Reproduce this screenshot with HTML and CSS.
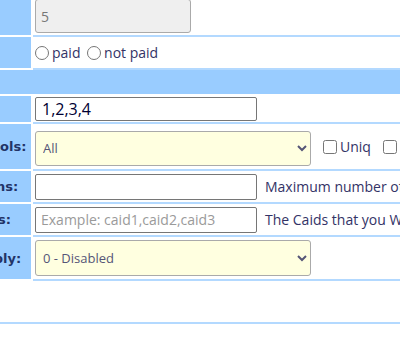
FILE: index.html
```html
<!DOCTYPE html>
<html lang="en">
<head>
  <meta charset="UTF-8">
  <title>Edit User</title>
  <link rel="stylesheet" href="styles.css">
</head>
<body>
  <table class="config">
    <colgroup>
      <col class="col-label">
      <col class="col-value">
    </colgroup>
    <tr class="row-first">
      <td class="label">Sleep:</td>
      <td class="value"><input class="field field-off" type="text" value="5" disabled></td>
    </tr>
    <tr class="row-pay">
      <td class="label">Status:</td>
      <td class="value">
        <label class="opt"><input type="radio" name="paid">paid</label>
        <label class="opt"><input type="radio" name="paid">not paid</label>
      </td>
    </tr>
    <tr class="row-head">
      <td class="head" colspan="2"></td>
    </tr>
    <tr class="row-short">
      <td class="label">Group:</td>
      <td class="value"><input class="field field-main" type="text" value="1,2,3,4"></td>
    </tr>
    <tr class="row-select">
      <td class="label">Allowed protocols:</td>
      <td class="value">
        <div class="line">
          <select class="pick pick-proto">
            <option>All</option>
          </select>
          <label class="check"><input type="checkbox">Uniq</label>
          <label class="check"><input type="checkbox">IP</label>
        </div>
      </td>
    </tr>
    <tr class="row-input">
      <td class="label">Max connections:</td>
      <td class="value">
        <div class="line">
          <input class="field" type="text">
          <span class="hint">Maximum number of connections</span>
        </div>
      </td>
    </tr>
    <tr class="row-input">
      <td class="label">Permitted caids:</td>
      <td class="value">
        <div class="line">
          <input class="field" type="text" placeholder="Example: caid1,caid2,caid3">
          <span class="hint">The Caids that you Want</span>
        </div>
      </td>
    </tr>
    <tr class="row-last">
      <td class="label">Cacheex no reply:</td>
      <td class="value">
        <select class="pick">
          <option>0 - Disabled</option>
        </select>
      </td>
    </tr>
    <tr class="row-empty">
      <td class="blank" colspan="2"></td>
    </tr>
  </table>
</body>
</html>
```

FILE: styles.css
```css
/* General Styles */
body {
  margin: 0;
  overflow: hidden;
  font-family: 'Open Sans', sans-serif;
  font-size: 14px;
  color: #333366;
  background-color: #fff;
}

.config {
  table-layout: fixed;
  border-collapse: separate;
  border-spacing: 0;
  margin-top: -12px;
  margin-left: -112px;
  width: 700px;
}

.col-label { width: 145px; }
.col-value { width: 555px; }

.config td {
  padding: 0;
  vertical-align: middle;
}

.label {
  padding-left: 2px !important;
  background-color: #99ccff;
  border-right: 2px solid #fff;
  border-bottom: 2px solid #fff;
  font-family: 'DejaVu Sans', Verdana, sans-serif;
  font-weight: bold;
  font-size: 13px;
  color: #223366;
  white-space: nowrap;
  overflow: hidden;
}

.value {
  padding-left: 2px !important;
  border-bottom: 2px solid #b3d9ff;
  white-space: nowrap;
  overflow: hidden;
}

.head {
  background-color: #99ccff;
  border-bottom: 2px solid #fff;
  height: 24px;
}

.blank {
  height: 41px;
  border-bottom: 2px solid #b3d9ff;
}

.row-first td { height: 47px; }
.row-pay td { height: 31px; }
.row-short td { height: 26px; }
.row-select td { height: 45px; }
.row-input td { height: 31px; }
.row-last td { height: 42px; }

.line {
  display: flex;
  align-items: center;
}

/* Inputs */
.field {
  box-sizing: border-box;
  width: 222px;
  height: 26px;
  margin: 0 8px 0 0;
  padding: 0 5px;
  border: 1px solid #767676;
  border-radius: 2px;
  font-family: 'Open Sans', sans-serif;
  font-size: 14px;
  color: #000033;
  background-color: #fff;
}

.field::placeholder {
  color: #9a9a9a;
}

.field-main {
  font-size: 16px;
  height: 24px;
  padding-left: 6px;
}

.field-off {
  width: 156px;
  height: 34px;
  margin-top: 9px;
  background-color: #efefef;
  border-color: #aaa;
  border-radius: 3px;
  color: #777;
}

.opt {
  margin-right: 3px;
}

.opt input,
.check input {
  width: 14px;
  height: 14px;
  margin: 0 3px 0 0;
  vertical-align: -2px;
}

/* Selects */
.pick {
  box-sizing: border-box;
  width: 276px;
  height: 36px;
  margin: 0 12px 0 0;
  padding: 0 3px;
  background-color: #ffffe0;
  border: 1px solid #aaa;
  border-radius: 3px;
  font-family: 'Open Sans', sans-serif;
  font-size: 13px;
  color: #555577;
}

.pick-proto {
  height: 35px;
  margin-top: 3px;
}

.check {
  margin-right: 12px;
}
```
